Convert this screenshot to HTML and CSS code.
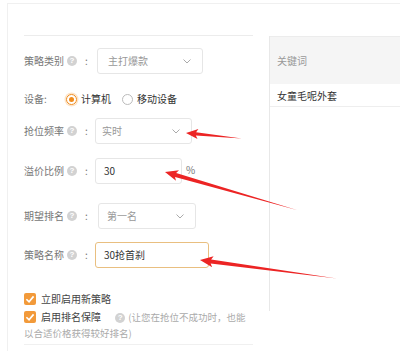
FILE: index.html
```html
<!DOCTYPE html>
<html>
<head>
  <meta charset="utf-8">
  <title>抢位策略</title>
  <link rel="stylesheet" href="styles.css">
</head>
<body>
  <div class="page">
    <div class="form">
      <div class="form-top"></div>

      <div class="row row-type">
        <span class="label">策略类别<i class="help">?</i><b class="colon">:</b></span>
        <div class="select sel-type">主打爆款<svg class="chev" viewBox="0 0 8 5"><polyline points="0.5,0.5 4,4 7.5,0.5"/></svg></div>
      </div>

      <div class="row row-device">
        <span class="label label-short">设备:</span>
        <label class="radio-item"><span class="radio on"></span>计算机</label>
        <label class="radio-item"><span class="radio"></span>移动设备</label>
      </div>

      <div class="row row-freq">
        <span class="label">抢位频率<i class="help">?</i><b class="colon">:</b></span>
        <div class="select sel-freq">实时<svg class="chev" viewBox="0 0 8 5"><polyline points="0.5,0.5 4,4 7.5,0.5"/></svg></div>
      </div>

      <div class="row row-premium">
        <span class="label">溢价比例<i class="help">?</i><b class="colon">:</b></span>
        <div class="input inp-premium">30</div>
        <span class="unit">%</span>
      </div>

      <div class="row row-rank">
        <span class="label">期望排名<i class="help">?</i><b class="colon">:</b></span>
        <div class="select sel-rank">第一名<svg class="chev" viewBox="0 0 8 5"><polyline points="0.5,0.5 4,4 7.5,0.5"/></svg></div>
      </div>

      <div class="row row-name">
        <span class="label">策略名称<i class="help">?</i><b class="colon">:</b></span>
        <div class="input inp-name focus">30抢首刹</div>
      </div>

      <div class="check-line check-first">
        <span class="checkbox"><svg viewBox="0 0 10 10"><polyline points="2,5.2 4.2,7.3 8,2.8"/></svg></span>立即启用新策略
      </div>
      <div class="check-block">
        <span class="checkbox"><svg viewBox="0 0 10 10"><polyline points="2,5.2 4.2,7.3 8,2.8"/></svg></span>启用排名保障
        <i class="help help-inline">?</i><span class="hint">(让您在抢位不成功时，也能<br>以合适价格获得较好排名)</span>
      </div>
      <div class="form-bottom"></div>
    </div>

    <div class="kw">
      <div class="kw-head">关键词</div>
      <div class="kw-row">女童毛呢外套</div>
    </div>
  </div>

  <svg class="arrows" width="400" height="351" viewBox="0 0 400 351">
    <g fill="#ec2424">
      <polygon transform="translate(186,133) rotate(5.1)" points="0,0 12,-5 10,-1.6 56,0.4 10,1.6 12,5"/>
      <polygon transform="translate(165,172) rotate(15.9)" points="0,0 13,-5.5 11,-2 138,0.4 11,2 13,5.5"/>
      <polygon transform="translate(200,260) rotate(7.5)" points="0,0 13,-5.5 11,-2 138,0.4 11,2 13,5.5"/>
    </g>
  </svg>
</body>
</html>
```

FILE: styles.css
```css
body {
  margin: 0;
  background: #fff;
  font-family: "Noto Sans CJK SC", "Noto Sans", sans-serif;
  font-size: 10px;
  color: #333;
}

.page {
  margin: 3px 0 0 7px;
  height: 348px;
  border-top: 1px solid #f0f0f0;
  border-left: 1px solid #f0f0f0;
  display: flex;
  box-sizing: border-box;
}

.form {
  width: 229px;
  margin-left: 16px;
}
.form-top {
  height: 31px;
  border-bottom: 1px solid #ececec;
}
.form-bottom {
  margin-top: 3px;
  border-top: 1px solid #f0f0f0;
}

.row {
  display: flex;
  align-items: center;
  height: 26px;
}
.row-type { margin-top: 12px; }
.row-device { margin-top: 16px; height: 18px; }
.row-freq { margin-top: 10px; }
.row-premium { margin-top: 14px; }
.row-rank { margin-top: 19px; }
.row-name { margin-top: 13px; }

.label {
  width: 71px;
  flex: none;
  display: flex;
  align-items: center;
  color: #777;
  line-height: 14px;
}
.label-short { width: 42px; }
.colon {
  font-weight: normal;
  margin-left: 8px;
}

.help {
  display: inline-block;
  width: 10px;
  height: 10px;
  margin-left: 3px;
  border-radius: 50%;
  background: #d2d2d2;
  color: #fff;
  font-style: normal;
  font-size: 8px;
  line-height: 10px;
  text-align: center;
  font-family: "Liberation Sans", sans-serif;
  font-weight: bold;
}

.select, .input {
  height: 26px;
  box-sizing: border-box;
  border: 1px solid #e6e6e6;
  border-radius: 3px;
  display: flex;
  align-items: center;
  padding-left: 8px;
  line-height: 14px;
}
.select { color: #999; }
.sel-type { width: 106px; margin-left: 2px; padding-left: 10px; }
.sel-freq { width: 97px; padding-left: 6px; }
.sel-rank { width: 98px; margin-left: 3px; }
.inp-premium { width: 87px; }
.inp-name { width: 114px; }
.input.focus { border-color: #e9bf80; }

.chev {
  width: 8px;
  height: 5px;
  margin-left: auto;
  margin-right: 11px;
  fill: none;
  stroke: #aaa;
  stroke-width: 1;
}

.unit {
  margin-left: 4px;
  margin-top: -4px;
  color: #777;
}

.radio-item {
  display: flex;
  align-items: center;
  margin-right: 11px;
  color: #333;
  line-height: 14px;
}
.radio {
  width: 9px;
  height: 9px;
  margin-right: 4px;
  border: 1px solid #bbb;
  border-radius: 50%;
  position: relative;
}
.radio.on {
  border-color: #f08c1e;
  box-shadow: 0 0 0 1.5px #fde4c8;
}
.radio.on::after {
  content: "";
  position: absolute;
  left: 2px;
  top: 2px;
  width: 5px;
  height: 5px;
  border-radius: 50%;
  background: #f08c1e;
}

.checkbox {
  display: inline-block;
  width: 12px;
  height: 12px;
  margin-right: 5px;
  border-radius: 2px;
  background: #f29a3a;
  vertical-align: -2px;
}
.checkbox svg {
  display: block;
  width: 12px;
  height: 12px;
  fill: none;
  stroke: #fff;
  stroke-width: 1.4;
}

.check-line {
  margin-top: 22px;
  line-height: 18px;
  color: #444;
}
.check-block {
  margin-top: 1px;
  line-height: 15px;
  color: #444;
}
.help-inline {
  margin-left: 12px;
  margin-right: 3px;
  vertical-align: 1px;
}
.hint {
  color: #aaa;
  font-size: 9.5px;
}

.kw {
  flex: 1;
  margin-left: 16px;
  margin-top: 32px;
  height: 275px;
  border-left: 1px solid #e8e8e8;
}
.kw-head {
  height: 47px;
  padding-left: 7px;
  display: flex;
  align-items: center;
  background: #f5f5f5;
  border-top: 1px solid #ececec;
  color: #999;
}
.kw-row {
  height: 22px;
  padding-left: 7px;
  display: flex;
  align-items: center;
  border-bottom: 1px solid #eee;
  color: #333;
}

.arrows {
  position: absolute;
  left: 0;
  top: 0;
}
```
